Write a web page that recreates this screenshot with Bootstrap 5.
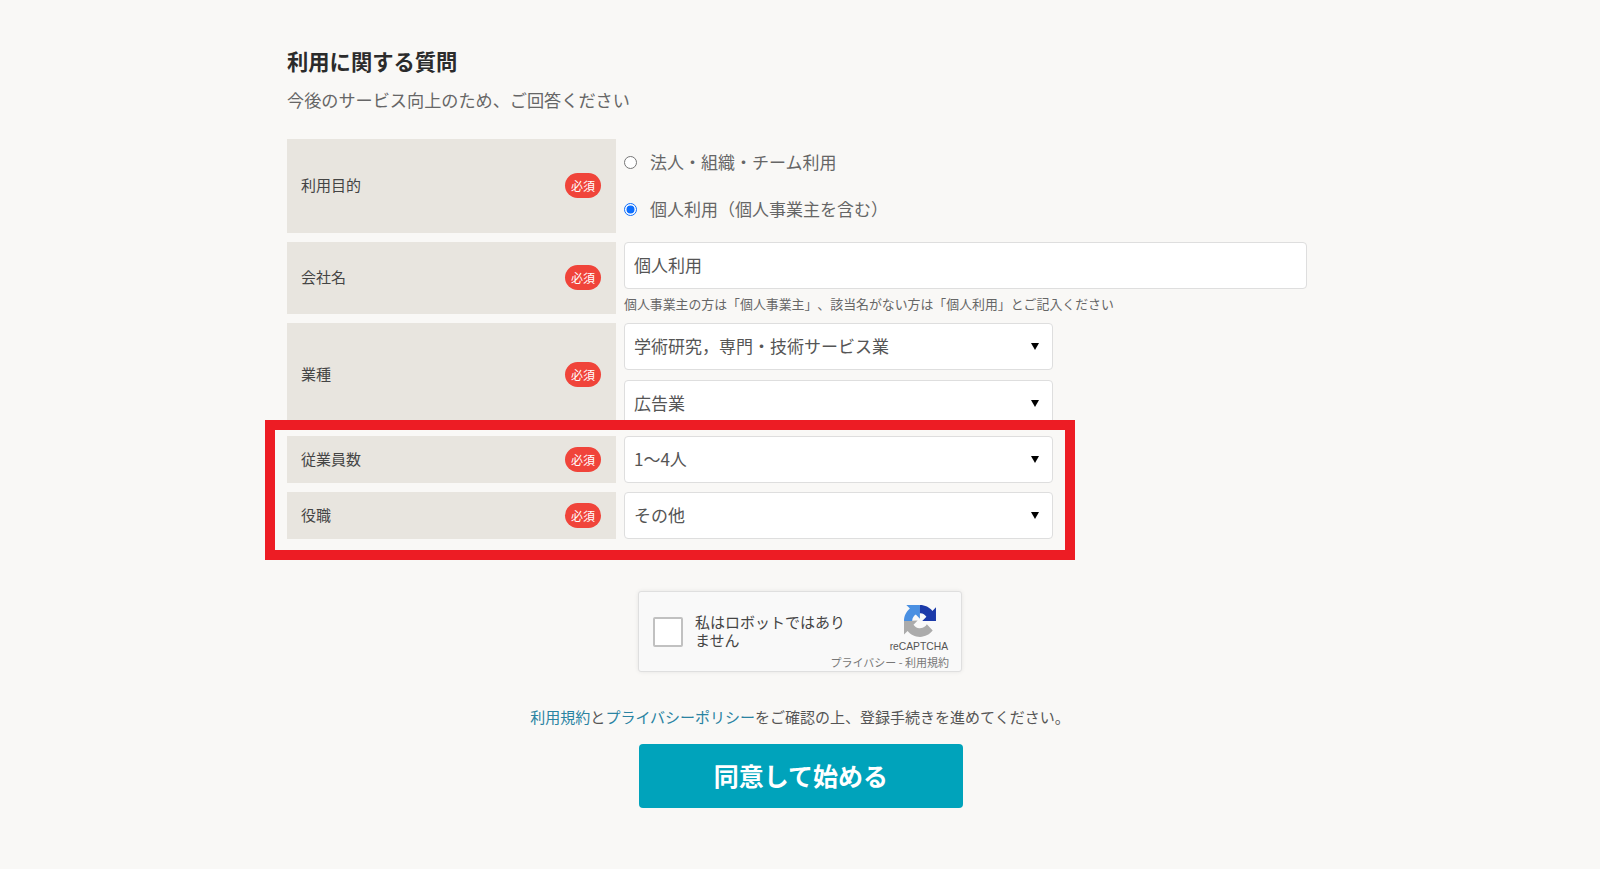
<!DOCTYPE html>
<html lang="ja">
  <head>
    <meta charset="UTF-8" />
    <meta name="viewport" content="width=device-width, initial-scale=1" />
    <title>利用に関する質問</title>
    <link href="https://cdn.jsdelivr.net/npm/bootstrap@5.3.3/dist/css/bootstrap.min.css" rel="stylesheet" />
    <style>
      body {
        background: #f9f8f6;
        color: #555;
        font-family: "Noto Sans CJK JP", "Noto Sans", sans-serif;
        text-spacing-trim: space-all;
      }
      .page-wrap { width: 1026px; margin: 0 auto; padding-top: 46px; }
      .page-title { font-size: 21.3px; line-height: 30px; font-weight: 700; color: #2b2b2b; margin: 0 0 11px; }
      .page-lead { font-size: 17.15px; line-height: 26px; color: #666; margin: 0 0 26px; }
      .q-list { display: flex; flex-direction: column; gap: 9px; }
      .q-label {
        width: 329px;
        background: #e8e5df;
        color: #444;
        font-size: 15px;
        padding: 0 15px 1px 14px;
        flex-shrink: 0;
      }
      .req-badge {
        width: 36px;
        height: 25px;
        padding: 0;
        line-height: 25px;
        font-size: 12px;
        font-weight: 400;
        background: #f0443a;
        color: #fff;
      }
      .q-field { margin-left: 8px; }
      .radio-row { height: 47px; margin: 0; padding: 0; font-size: 17px; color: #666; }
      .radio-row span { margin-top: -2px; }
      .radio-row .form-check-input {
        float: none;
        width: 13px;
        height: 13px;
        margin: 0 13px 0 0;
        border: 1px solid #767676;
        background-color: #fff;
      }
      .radio-row .form-check-input:checked {
        border-color: #0d6efd;
        background-color: #fff;
        background-image: url("data:image/svg+xml,%3csvg xmlns='http://www.w3.org/2000/svg' viewBox='0 0 13 13'%3e%3ccircle cx='6.5' cy='6.5' r='4' fill='%230d6efd'/%3e%3c/svg%3e");
        background-size: 13px 13px;
      }
      .text-box, .select-box {
        height: 47px;
        padding: 0 9px 1px;
        font-size: 17px;
        color: #555;
        background-color: #fff;
        border: 1px solid #dedede;
        border-radius: 4px;
      }
      .text-box { width: 683px; padding-bottom: 2px; }
      .select-box {
        width: 429px;
        background-image: url("data:image/svg+xml,%3csvg xmlns='http://www.w3.org/2000/svg' viewBox='0 0 8 7'%3e%3cpath d='M0 0h8L4 7z' fill='%23000'/%3e%3c/svg%3e");
        background-size: 8px 7px;
        background-position: right 13px center;
      }
      .select-stack { display: flex; flex-direction: column; gap: 10px; }
      .hint-text { font-size: 12.9px; line-height: 20px; margin-top: 5px; color: #666; }
      .mark-area { position: relative; display: flex; flex-direction: column; gap: 9px; }
      .mark-frame {
        position: absolute;
        top: -16px;
        left: -22px;
        width: 810px;
        height: 140px;
        border: 10px solid #ed1c24;
        pointer-events: none;
      }
      .captcha-box {
        width: 324px;
        height: 81px;
        margin: 52px auto 0;
        background: #f9f9f9;
        border: 1px solid #dfdfdf;
        border-radius: 3px;
        box-shadow: 0 0 4px rgba(0, 0, 0, .08);
        position: relative;
      }
      .captcha-check {
        width: 30px;
        height: 30px;
        margin-left: 14px;
        background: #fff;
        border: 2px solid #c1c1c1;
        border-radius: 2px;
        flex-shrink: 0;
      }
      .captcha-text { width: 165px; margin: -2px 0 0 12px; font-size: 15px; line-height: 17.5px; color: #444; }
      .captcha-logo { position: absolute; top: 13px; right: 25px; width: 32px; height: 32px; }
      .captcha-name {
        position: absolute;
        top: 48px;
        right: 13px;
        font-family: "Liberation Sans", sans-serif;
        font-size: 10.3px;
        line-height: 14px;
        color: #555;
      }
      .captcha-links { position: absolute; top: 63px; right: 12px; font-size: 11px; line-height: 15px; color: #777; }
      .agree-text { margin: 33px 0 15px; font-size: 15px; line-height: 24px; color: #555; text-align: center; }
      .agree-text a { color: #2a83a2; text-decoration: none; }
      .start-btn {
        display: block;
        width: 324px;
        height: 64px;
        margin: 0 0 0 352px;
        padding: 0;
        background: #00a3bb;
        border: 0;
        border-radius: 4px;
        color: #fff;
        font-size: 25px;
        font-weight: 700;
      }
    </style>
  </head>
  <body>
    <div class="page-wrap">
      <h2 class="page-title">利用に関する質問</h2>
      <p class="page-lead">今後のサービス向上のため、ご回答ください</p>

      <form class="q-list">
        <div class="d-flex">
          <div class="q-label d-flex align-items-center justify-content-between">
            <span>利用目的</span><span class="badge rounded-pill req-badge">必須</span>
          </div>
          <div class="q-field">
            <label class="form-check radio-row d-flex align-items-center">
              <input class="form-check-input" type="radio" name="purpose" /><span>法人・組織・チーム利用</span>
            </label>
            <label class="form-check radio-row d-flex align-items-center">
              <input class="form-check-input" type="radio" name="purpose" checked /><span>個人利用（個人事業主を含む）</span>
            </label>
          </div>
        </div>

        <div class="d-flex">
          <div class="q-label d-flex align-items-center justify-content-between">
            <span>会社名</span><span class="badge rounded-pill req-badge">必須</span>
          </div>
          <div class="q-field">
            <input type="text" class="form-control text-box" value="個人利用" />
            <div class="hint-text">個人事業主の方は「個人事業主」、該当名がない方は「個人利用」とご記入ください</div>
          </div>
        </div>

        <div class="d-flex">
          <div class="q-label d-flex align-items-center justify-content-between">
            <span>業種</span><span class="badge rounded-pill req-badge">必須</span>
          </div>
          <div class="q-field select-stack">
            <select class="form-select select-box"><option>学術研究，専門・技術サービス業</option></select>
            <select class="form-select select-box"><option>広告業</option></select>
          </div>
        </div>

        <div class="mark-area">
          <div class="d-flex">
            <div class="q-label d-flex align-items-center justify-content-between">
              <span>従業員数</span><span class="badge rounded-pill req-badge">必須</span>
            </div>
            <div class="q-field">
              <select class="form-select select-box"><option>1〜4人</option></select>
            </div>
          </div>
          <div class="d-flex">
            <div class="q-label d-flex align-items-center justify-content-between">
              <span>役職</span><span class="badge rounded-pill req-badge">必須</span>
            </div>
            <div class="q-field">
              <select class="form-select select-box"><option>その他</option></select>
            </div>
          </div>
          <div class="mark-frame"></div>
        </div>
      </form>

      <div class="captcha-box d-flex align-items-center">
        <div class="captcha-check"></div>
        <div class="captcha-text">私はロボットではありません</div>
        <svg class="captcha-logo" viewBox="0 0 64 64" aria-hidden="true">
          <path fill="#ababab" d="M.001 31.955l.033 1.37v25.9l7.16-7.16c5.86 7.173 14.775 11.754 24.76 11.754 10.4 0 19.622-4.96 25.458-12.64L45.677 38.32a15.55 15.55 0 0 1-4.754 5.334c-2.05 1.6-4.952 2.906-8.968 2.906-.485 0-.86-.057-1.135-.163-4.976-.393-9.288-3.14-11.828-7.124l8.307-8.307L.001 31.953" />
          <path fill="#4a90e2" d="M31.862 0l-1.37.033H4.594l7.16 7.16C4.58 13.052 0 21.967 0 31.95c0 .01 16.26 0 16.26 0 0-.485.057-.86.163-1.135.393-4.976 3.14-9.288 7.124-11.828l8.307 8.307L31.86 0" />
          <path fill="#1c3aa9" d="M64 31.955l-.033-1.37V4.687l-7.16 7.16C50.948 4.674 42.033.093 32.05.093c-.4 0-.2 16.26-.2 16.26.485 0 .86.057 1.135.163 4.976.393 9.288 3.14 11.828 7.124l-8.307 8.307L64 31.953" />
        </svg>
        <div class="captcha-name">reCAPTCHA</div>
        <div class="captcha-links">プライバシー - 利用規約</div>
      </div>

      <p class="agree-text"><a href="#">利用規約</a>と<a href="#">プライバシーポリシー</a>をご確認の上、登録手続きを進めてください。</p>
      <button type="button" class="btn start-btn">同意して始める</button>
    </div>
    <script src="https://cdn.jsdelivr.net/npm/bootstrap@5.3.3/dist/js/bootstrap.bundle.min.js"></script>
  </body>
</html>
